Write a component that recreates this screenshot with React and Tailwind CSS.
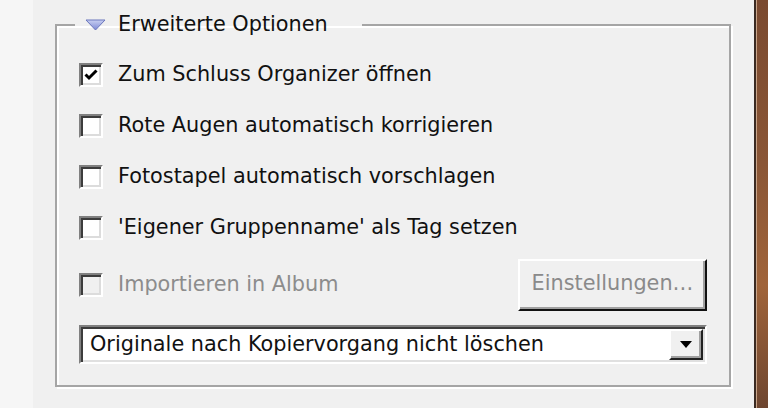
import React from "react";

const font = { fontFamily: '"DejaVu Sans", "Liberation Sans", sans-serif' };

// Classic sunken checkbox
const Checkbox = ({ checked, disabled }) => (
  <div
    className={`w-[24px] h-[24px] shrink-0 border-2 border-t-[#808080] border-l-[#808080] border-b-[#ffffff] border-r-[#ffffff] shadow-[inset_2px_2px_0_#3c3c3c,inset_-2px_-2px_0_#dcdcdc] flex items-center justify-center ${
      disabled ? "bg-[#f0f0f0]" : "bg-white"
    }`}
  >
    {checked && (
      <svg width="14" height="12" viewBox="0 0 14 12">
        <path d="M1.5 5.5 L5 9 L12.5 1.5" fill="none" stroke="#000" strokeWidth="3" />
      </svg>
    )}
  </div>
);

const Row = ({ label, checked }) => (
  <div className="h-[51px] flex items-center gap-[15px]">
    <Checkbox checked={checked} />
    <span className="text-[20.8px] text-[#111]">{label}</span>
  </div>
);

export default function App() {
  return (
    <div className="w-[768px] h-[408px] flex bg-[#f0f0f0] overflow-hidden" style={font}>
      {/* left strip */}
      <div className="w-[33px] bg-[#f6f6f6]" />

      {/* dialog content */}
      <div className="flex-1 pl-[22px] pr-[23px]">
        <fieldset className="mt-[13px] h-[374px] border-2 border-[#a5a5a5] shadow-[inset_2px_2px_0_#ffffff,2px_2px_0_#ffffff] px-[22px] pt-[12px] pb-0 m-0">
          <legend className="ml-[-4px] pl-[10px] pr-[34px] flex items-center gap-[12px] h-[24px]">
            <svg width="21" height="12" viewBox="0 0 21 12">
              <defs>
                <linearGradient id="tri" x1="0" y1="0" x2="0" y2="1">
                  <stop offset="0" stopColor="#c9d0f2" />
                  <stop offset="1" stopColor="#7c88d4" />
                </linearGradient>
              </defs>
              <path d="M1 1 L20 1 L10.5 11 Z" fill="url(#tri)" stroke="#6a76bd" strokeWidth="1" />
            </svg>
            <span className="text-[20.8px] text-[#111]">Erweiterte Optionen</span>
          </legend>

          <Row label="Zum Schluss Organizer öffnen" checked />
          <Row label="Rote Augen automatisch korrigieren" />
          <Row label="Fotostapel automatisch vorschlagen" />
          <Row label="'Eigener Gruppenname' als Tag setzen" />

          <div className="mt-[6px] flex items-center justify-between">
            <div className="flex items-center gap-[15px]">
              <Checkbox disabled />
              <span className="text-[20.8px] text-[#8c8c8c]">Importieren in Album</span>
            </div>
            <button className="w-[189px] h-[52px] bg-[#f0f0f0] border-2 border-t-white border-l-white border-b-[#111] border-r-[#111] shadow-[inset_-2px_-2px_0_#a0a0a0] text-[20.8px] text-[#8a8a8a] pb-[2px]">
              Einstellungen…
            </button>
          </div>

          <div className="mt-[14px] h-[39px] flex bg-white border-2 border-t-[#808080] border-l-[#808080] border-b-white border-r-white shadow-[inset_2px_2px_0_#3c3c3c,inset_-2px_-2px_0_#e0e0e0]">
            <div className="flex-1 flex items-center pl-[9px] text-[20.8px] text-[#111]">
              Originale nach Kopiervorgang nicht löschen
            </div>
            <div className="w-[34px] my-[2px] mr-[2px] bg-[#f0f0f0] border-2 border-t-white border-l-white border-b-[#222] border-r-[#222] shadow-[inset_-2px_-2px_0_#a0a0a0] flex items-center justify-center">
              <svg width="12" height="7" viewBox="0 0 12 7">
                <path d="M0 0 L12 0 L6 7 Z" fill="#000" />
              </svg>
            </div>
          </div>
        </fieldset>
      </div>

      {/* wood edge */}
      <div className="w-[14px] flex">
        <div className="w-[2px] bg-[#3a2a22]" />
        <div className="w-[1px] bg-[#c9a58a]" />
        <div className="flex-1 bg-[linear-gradient(180deg,#7a4a30,#8a5636_40%,#a0643a_70%,#6e4630)]" />
      </div>
    </div>
  );
}
